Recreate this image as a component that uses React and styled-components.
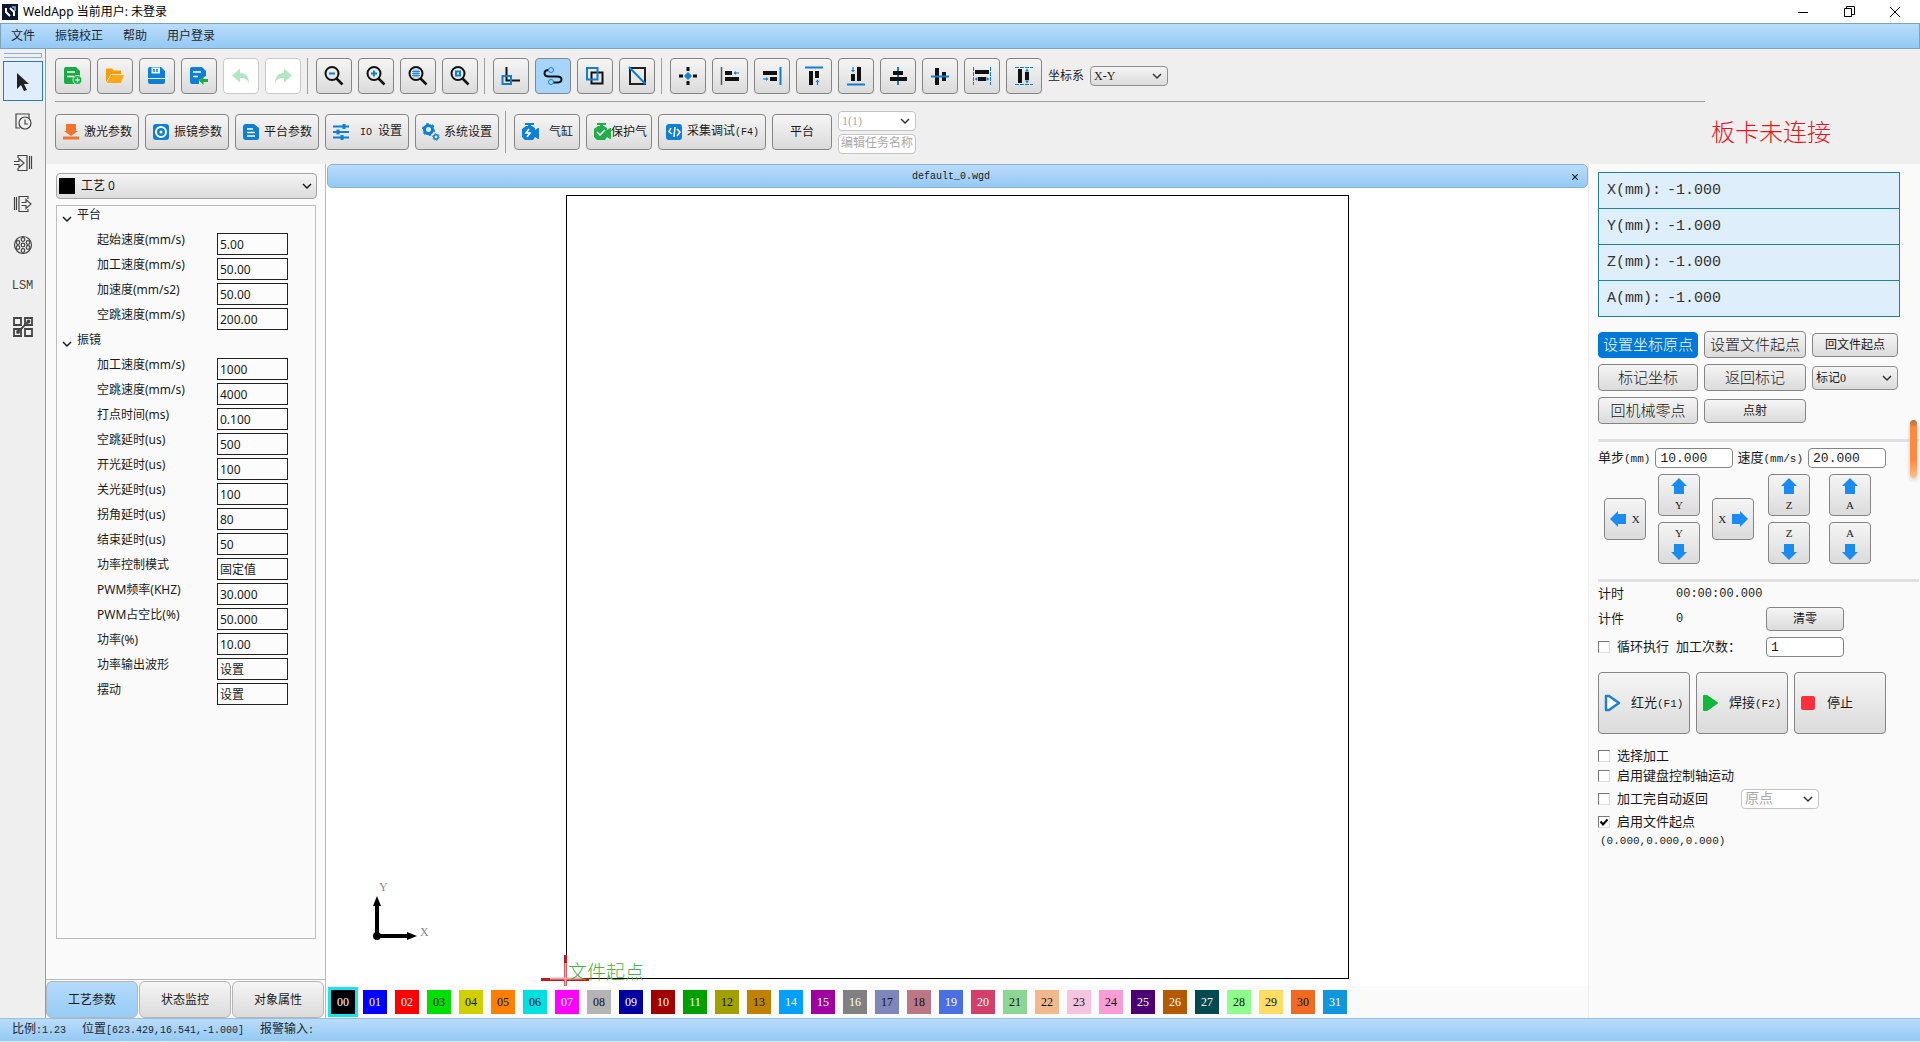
import { useState } from "react";
import styled, { createGlobalStyle, css } from "styled-components";

const ui = `"Noto Sans", "Noto Sans CJK SC", sans-serif`;
const song = `"Liberation Serif", "Noto Sans CJK SC", serif`;
const mono = `"Liberation Mono", "Noto Sans CJK SC", monospace`;

const blue = "#0f7fd4";
const bar = "linear-gradient(#badcfb, #93c9f4)";
const metal = "linear-gradient(#f5f5f5, #dbdbdb)";

const GlobalStyle = createGlobalStyle`
  * { box-sizing: border-box; }
  body {
    margin: 0;
    background: #efefef;
    color: #1a1a1a;
    font: 12px/16px ${song};
  }
  button, input, select {
    margin: 0;
    font: inherit;
    color: inherit;
  }
  svg { display: block; flex: none; }
`;

/* ---------- shared parts ---------- */

const Mono = styled.span`
  font-family: ${mono};
  font-size: ${(props) => props.$size}px;
`;

// half width letters are set smaller so that two of them fill one han cell
const Song = ({ size = 12, children }) =>
  children
    .split(/([\x20-\x7e]+)/)
    .map((part, i) =>
      i % 2 ? <Mono key={i} $size={Math.round((size * 5) / 6)}>{part}</Mono> : part
    );

const Button = styled.button`
  display: flex;
  align-items: center;
  justify-content: center;
  width: ${(props) => (props.$w ? props.$w + "px" : "auto")};
  height: ${(props) => props.$h || 24}px;
  padding: 0;
  border: 1px solid #858585;
  border-radius: 4px;
  background: ${metal};
  font-size: ${(props) => props.$size || 12}px;
  font-weight: ${(props) => (props.$size > 14 ? 300 : 400)};
  white-space: nowrap;
  ${(props) =>
    props.$primary &&
    css`
      border-color: #0078d7;
      background: #0078d7;
      color: #fff;
    `}
`;

const SelectWrap = styled.div`
  position: relative;
  width: ${(props) => props.$w}px;
  color: ${(props) => (props.$off ? "#a8a8a8" : "inherit")};
  svg {
    position: absolute;
    right: 5px;
    top: calc(50% - 6px);
    pointer-events: none;
    color: #333;
  }
`;

const SelectBox = styled.select`
  display: block;
  appearance: none;
  width: 100%;
  height: ${(props) => props.$h}px;
  padding: 0 20px 0 3px;
  border: 1px solid ${(props) => (props.$off ? "#c4c4c4" : "#8f8f8f")};
  border-radius: 4px;
  background: ${(props) => (props.$off ? "#fff" : metal)};
  font-size: ${(props) => props.$size || 12}px;
  opacity: 1;
`;

const Chevron = () => (
  <svg width="12" height="12" viewBox="0 0 12 12" fill="none" stroke="currentColor" strokeWidth="1.5">
    <path d="M2 4l4 4 4-4" />
  </svg>
);

const Select = ({ w, h, off, size, label, value }) => (
  <SelectWrap $w={w} $off={off}>
    <SelectBox $h={h} $off={off} $size={size} disabled={off} aria-label={label} defaultValue={value}>
      <option>{value}</option>
    </SelectBox>
    <Chevron />
  </SelectWrap>
);

const TextInput = styled.input`
  width: 78px;
  height: 20px;
  padding: 0 ${(props) => (props.disabled ? 2 : 4)}px;
  border: 1px solid ${(props) => (props.disabled ? "#c4c4c4" : "#858585")};
  border-radius: 4px;
  background: #fff;
  font-family: ${mono};
  font-size: ${(props) => props.$size || 13}px;
  &::placeholder {
    color: #a8a8a8;
  }
`;

/* ---------- title and menu ---------- */

const Window = styled.div`
  display: flex;
  flex-direction: column;
  min-height: 100vh;
`;

const TitleBar = styled.header`
  display: flex;
  align-items: center;
  gap: 5px;
  height: 23px;
  padding-left: 2px;
  background: #fff;
  color: #000;
  font-family: ${ui};
`;

const WindowButtons = styled.div`
  display: flex;
  margin-left: auto;
  padding-right: 2px;
  button {
    display: grid;
    place-items: center;
    width: 46px;
    height: 20px;
    padding: 0;
    border: 0;
    background: none;
  }
`;

const MenuBar = styled.nav`
  display: flex;
  align-items: center;
  gap: 20px;
  height: 26px;
  padding-left: 10px;
  border: 1px solid #7ba2be;
  background: ${bar};
  font-family: ${ui};
  a {
    color: #1c2733;
    text-decoration: none;
  }
`;

/* ---------- frame ---------- */

const Body = styled.div`
  flex: 1;
  display: flex;
`;

const SideTools = styled.div`
  display: flex;
  flex-direction: column;
  align-items: center;
  gap: 1px;
  width: 46px;
  padding-top: 4px;
  border-right: 1px solid #9c9c9c;
`;

const Grip = styled.div`
  width: 38px;
  height: 5px;
  margin-bottom: 2px;
  border: 1px solid #8fb0cb;
  border-left: 0;
`;

const SideButton = styled.button`
  display: grid;
  place-items: center;
  width: 40px;
  height: 40px;
  padding: 0;
  border: 1px solid ${(props) => (props.$on ? "#2a7ab5" : "transparent")};
  background: ${(props) => (props.$on ? "#e0eefb" : "none")};
  font: 12px ${mono};
  color: #444;
`;

const Main = styled.main`
  flex: 1;
  display: flex;
  flex-direction: column;
  min-width: 0;
`;

const Top = styled.div`
  display: flex;
  height: 115px;
`;

const Toolbars = styled.div`
  flex: 1;
  padding-left: 9px;
`;

const ToolRow = styled.div`
  display: flex;
  align-items: center;
  gap: 6px;
  height: ${(props) => props.$h}px;
  padding-top: ${(props) => (props.$line ? 2 : 0)}px;
  padding-bottom: ${(props) => props.$pad || 0}px;
  border-bottom: ${(props) => (props.$line ? "1px solid #9f9f9f" : "0")};
`;

const Divider = styled.div`
  width: 1px;
  height: ${(props) => props.$h}px;
  margin-right: 2px;
  background: #9f9f9f;
`;

const ToolButton = styled(Button)`
  width: 36px;
  height: 36px;
  background: ${(props) => (props.$on ? "#a6d4fb" : metal)};
  &:disabled {
    border-color: #c9c9c9;
    background: #fff;
  }
`;

const LabelButton = styled(Button)`
  height: 36px;
  padding: 0 6px;
  justify-content: ${(props) => (props.$center ? "center" : "space-between")};
`;

const Stack = styled.div`
  display: grid;
  gap: 3px;
`;

const Alert = styled.div`
  width: 215px;
  padding: 68px 0 0 6px;
  color: #e8141c;
  font-size: 24px;
  line-height: 32px;
  font-weight: 300;
`;

const Work = styled.div`
  flex: 1;
  display: flex;
`;

/* ---------- left panel ---------- */

const LeftPanel = styled.aside`
  display: flex;
  flex-direction: column;
  width: 280px;
  background: #fafafa;
  border-right: 1px solid #b9b9b9;
`;

const CraftSelect = styled.div`
  display: flex;
  align-items: center;
  position: relative;
  height: 26px;
  margin: 9px 8px 6px 10px;
  padding-left: 2px;
  border: 1px solid #a3a3a3;
  border-radius: 4px;
  background: ${metal};
  select {
    flex: 1;
    appearance: none;
    height: 24px;
    padding: 0 6px;
    border: 0;
    background: none;
    font-family: ${ui};
  }
  svg {
    position: absolute;
    right: 3px;
    pointer-events: none;
  }
`;

const Swatch = styled.span`
  width: 16px;
  height: 16px;
  background: #000;
`;

const Tree = styled.div`
  flex: 1;
  margin: 0 9px 40px 10px;
  border: 1px solid #bdbdbd;
  font-family: ${ui};
`;

const Group = styled.div`
  display: flex;
  gap: 4px;
  height: 25px;
  padding-left: 4px;
  line-height: 18px;
  svg {
    margin-top: 7px;
  }
`;

const Param = styled.label`
  display: flex;
  height: 25px;
  padding-left: 40px;
  line-height: 18px;
  span {
    width: 120px;
  }
  input {
    width: 71px;
    height: 22px;
    margin-top: 2px;
    padding: 0 2px;
    border: 1px solid #222;
    background: #fcfcfc;
    font-family: ${ui};
  }
`;

const Tabs = styled.div`
  display: grid;
  grid-template-columns: repeat(3, 1fr);
  gap: 1px;
  height: 39px;
  padding: 1px 1px 1px 0;
  border-top: 1px solid #b9b9b9;
`;

const Tab = styled(Button)`
  height: 37px;
  border-color: #b5b5b5;
  border-radius: 6px;
  background: ${(props) => (props.$on ? "linear-gradient(#b5dafb, #97ccf6)" : metal)};
`;

/* ---------- drawing area ---------- */

const Center = styled.section`
  flex: 1;
  display: flex;
  flex-direction: column;
  min-width: 0;
  background: #fff;
`;

const FileTab = styled.div`
  display: flex;
  align-items: center;
  height: 24px;
  padding: 1px 3px 0 8px;
  margin-left: 1px;
  border: 1px solid #8cb3d1;
  border-radius: 5px;
  background: ${bar};
  span {
    flex: 1;
    text-align: center;
  }
  button {
    width: 18px;
    padding: 0;
    border: 0;
    background: none;
    line-height: 16px;
    svg {
      margin: auto;
    }
  }
`;

const Canvas = styled.div`
  flex: 1;
  position: relative;
  > svg {
    position: absolute;
    inset: 0;
    width: 100%;
    height: 100%;
  }
`;

const Palette = styled.div`
  display: flex;
  align-items: center;
  gap: 8px;
  height: 32px;
  padding-left: 5px;
  background: #fafafa;
`;

const PaletteButton = styled.button`
  width: 24px;
  height: 24px;
  padding: 0;
  border: 0;
  outline: ${(props) => (props.$on ? "3px solid #19e3ee" : "none")};
  background: ${(props) => props.$bg};
  color: ${(props) => props.$fg};
  font: 12px/24px ${song};
`;

/* ---------- right panel ---------- */

const RightPanel = styled.aside`
  position: relative;
  width: 332px;
  padding: 8px 1px 0 9px;
  border-left: 1px solid #ececec;
  background: #fafafa;
`;

const Readout = styled.div`
  width: 302px;
  border: 1px solid #1f809f;
  background: #deeefa;
  color: #333;
  div {
    display: flex;
    gap: 6px;
    height: 36px;
    padding-left: 8px;
    font: 15px/36px ${mono};
    border-bottom: 1px solid #1f809f;
  }
  div:last-child {
    height: 35px;
    border: 0;
  }
`;

const Actions = styled.div`
  display: grid;
  grid-template-columns: 100px 102px 86px;
  grid-auto-rows: 27px;
  align-items: center;
  gap: 6px;
  padding: 14px 0 15px;
`;

const Rule = styled.div`
  height: 3px;
  background: #e0e0e0;
`;

const StepRow = styled.div`
  display: flex;
  align-items: center;
  gap: 4px;
  padding: 6px 0;
  label {
    display: flex;
    align-items: center;
    gap: 5px;
    font-size: 13px;
    white-space: nowrap;
  }
`;

const Jog = styled.div`
  display: grid;
  grid-template-columns: 54px 54px 56px 61px 42px;
  grid-template-rows: 42px 42px;
  gap: 6px 0;
  padding: 0 0 15px 6px;
`;

const JogButton = styled(Button)`
  width: 42px;
  height: 42px;
  flex-direction: ${(props) => props.$dir};
  justify-content: space-evenly;
  grid-row: ${(props) => props.$row};
  grid-column: ${(props) => props.$col};
  align-self: center;
  font-size: 11px;
  line-height: 14px;
`;

const Counter = styled.div`
  display: grid;
  grid-template-columns: 78px 90px 78px;
  align-items: center;
  grid-template-rows: 24px 25px 32px;
  font-size: 13px;
`;

const Check = styled.label`
  display: flex;
  align-items: center;
  gap: 7px;
  height: ${(props) => props.$h || 20}px;
  font-size: 13px;
  white-space: nowrap;
  input {
    appearance: none;
    width: 12px;
    height: 12px;
    border: 1px solid #777;
    border-color: #777 #ddd #ddd #777;
    background: #fff;
  }
  input:checked {
    background: #fff
      url("data:image/svg+xml,%3Csvg xmlns='http://www.w3.org/2000/svg' viewBox='0 0 10 10'%3E%3Cpath d='M1.5 4.5l2.5 3 4.5-5' fill='none' stroke='%23000' stroke-width='2'/%3E%3C/svg%3E");
  }
`;

const RunButtons = styled.div`
  display: grid;
  grid-template-columns: repeat(3, 92px);
  gap: 6px;
  padding: 9px 0 12px;
`;

const RunButton = styled(Button)`
  height: 62px;
  justify-content: flex-start;
  gap: 10px;
  padding-left: 4px;
  font-size: 13px;
`;

const Spread = styled.div`
  display: flex;
  align-items: center;
  gap: 33px;
  height: 26px;
`;

const Origin = styled.div`
  padding-left: 2px;
  font: 11px/18px ${mono};
`;

const Handle = styled.div`
  position: absolute;
  right: 3px;
  top: 256px;
  width: 7px;
  height: 58px;
  border-radius: 4px;
  background: linear-gradient(#a9714a, #ff8a3d 8px, #ff8a3d 40px, #ffc08f);
  box-shadow: 0 2px 4px #ccc;
`;

const StatusBar = styled.footer`
  display: flex;
  align-items: center;
  gap: 16px;
  height: 24px;
  padding-left: 12px;
  border-top: 1px solid #9bbfda;
  border-bottom: 1px solid #dfeefb;
  background: ${bar};
  color: #1c2733;
`;

/* ---------- icons ---------- */

// tool icons are drawn on the 36px button grid
const Glyph = ({ children }) => (
  <svg width="34" height="34" viewBox="1 1 34 34" fill="none">{children}</svg>
);

const Small = ({ children }) => (
  <svg width="18" height="18" viewBox="0 0 18 18" fill="none">{children}</svg>
);

const Lens = ({ children }) => (
  <Glyph>
    <circle cx="16" cy="15.5" r="6.5" stroke="#111" strokeWidth="2" />
    <path d="M20.5 20.5l6 6" stroke="#111" strokeWidth="2.5" />
    {children}
  </Glyph>
);

const fileIcons = [
  <Glyph>
    <path d="M11 9h10l4 4v7a5 5 0 0 0-6 6h-8a2 2 0 0 1-2-2V11a2 2 0 0 1 2-2z" fill="#1aab47" />
    <path d="M12 14h8M12 18.500h7" stroke="#fff" strokeWidth="1.500" />
    <circle cx="22.500" cy="22" r="4.500" fill="#1aab47" stroke="#d9f1e0" />
    <path d="M20 22h5M22.500 19.500v5" stroke="#fff" strokeWidth="1.200" />
  </Glyph>,
  <Glyph>
    <path d="M9 24V11.500a1 1 0 0 1 1-1h5l2 2h7v3.500H14z" fill="#f99c0a" />
    <path d="M14 17h13l-3 8H9.500z" fill="#ffa914" />
  </Glyph>,
  <Glyph>
    <path d="M11 9h11l4 4v9H9V11a2 2 0 0 1 2-2z" fill={blue} />
    <path d="M12.500 9.500h8.500v6h-8.500z" fill="#eaf4fc" />
    <path d="M15 11v3M18 11v3" stroke={blue} strokeWidth="1.500" />
    <path d="M9 20.500h17" stroke="#eaf4fc" />
    <path d="M9 21.500h17V24a2 2 0 0 1-2 2H11a2 2 0 0 1-2-2z" fill={blue} />
  </Glyph>,
  <Glyph>
    <path d="M11 9h10l4 4v5l-7 4v4h-7a2 2 0 0 1-2-2V11a2 2 0 0 1 2-2z" fill={blue} />
    <path d="M12 14h8M12 18.500h5" stroke="#fff" strokeWidth="1.500" />
    <path d="M18 22.500l4.500-4v2.500h4.500v3h-4.500v3z" fill="#17ad3c" />
  </Glyph>,
];

const historyIcons = [
  <Glyph><path d="M17 10.500v4.500c6 0 9 4 9 10-2-4-4-5-9-5v4.500l-8-7z" fill="#b3e6c2" /></Glyph>,
  <Glyph><path d="M19 10.500v4.500c-6 0-9 4-9 10 2-4 4-5 9-5v4.500l8-7z" fill="#b3e6c2" /></Glyph>,
];

const zoomIcons = [
  <Lens><path d="M13 15.500h6" stroke={blue} strokeWidth="2" /></Lens>,
  <Lens><path d="M13 15.500h6M16 12.500v6" stroke={blue} strokeWidth="2" /></Lens>,
  <Lens><path d="M12 13.500h8M12 15.500h8M12 17.500h8M14 11.500v8M16 11.500v8M18 11.500v8" stroke={blue} strokeWidth=".8" /></Lens>,
  <Lens><path d="M14 13.500h4v4h-4z" stroke={blue} strokeWidth="2" /></Lens>,
];

const viewIcons = [
  <Glyph>
    <path d="M13.500 9v13.500H27" stroke="#111" strokeWidth="2" />
    <path d="M9.500 18h8.500v8H9.500z" stroke={blue} strokeWidth="2" />
  </Glyph>,
  <Glyph>
    <path d="M16 12H14c-6 0-6 6.500 0 6.500h8c6 0 6 6 0 6h-6" stroke="#111" strokeWidth="2" />
    <circle cx="16" cy="12" r="2.500" fill="#a6d4fb" stroke={blue} />
    <circle cx="16" cy="24" r="2.500" fill="#a6d4fb" stroke={blue} />
  </Glyph>,
  <Glyph>
    <path d="M14.500 14.500h11v11h-11z" stroke="#111" strokeWidth="2" />
    <path d="M10 10h10.500v11.500H10z" stroke={blue} strokeWidth="2" />
  </Glyph>,
  <Glyph>
    <path d="M11 26V10h15v16z" stroke="#222" strokeWidth="2" />
    <path d="M10 9l16.500 17" stroke={blue} strokeWidth="2" />
  </Glyph>,
];

const alignIcons = [
  <Glyph>
    <path d="M18 9v4M18 23v4M9 18h4M23 18h4" stroke="#111" strokeWidth="3" />
    <path d="M18 14.500l3.500 3.500-3.500 3.500-3.500-3.500z" fill={blue} stroke={blue} />
  </Glyph>,
  <Glyph>
    <path d="M9.500 9v18" stroke="#555" strokeWidth="1.500" />
    <path d="M13 13h7v4h-7zM13 19h14v4H13z" fill="#111" />
    <path d="M27 15h-4" stroke={blue} strokeWidth="1.200" /><path d="M21.500 15l2.500-2v4z" fill={blue} />
  </Glyph>,
  <Glyph>
    <path d="M26.500 9v18" stroke={blue} strokeWidth="2" />
    <path d="M9 13h14v4H9zM16 19h7v4h-7z" fill="#111" />
    <path d="M9 21h4" stroke={blue} strokeWidth="1.200" /><path d="M14.500 21l-2.500-2v4z" fill={blue} />
  </Glyph>,
  <Glyph>
    <path d="M9 9.500h18" stroke={blue} strokeWidth="2" />
    <path d="M13 13h4v14h-4zM19 13h4v7h-4z" fill="#111" />
    <path d="M21.500 27v-3" stroke={blue} strokeWidth="1.200" /><path d="M21.500 21.500l2 2.500h-4z" fill={blue} />
  </Glyph>,
  <Glyph>
    <path d="M9 26.500h18" stroke={blue} strokeWidth="2" />
    <path d="M13 16h4v7h-4zM19 9h4v14h-4z" fill="#111" />
    <path d="M15 9v3" stroke={blue} strokeWidth="1.200" /><path d="M15 14.500l2-2.500h-4z" fill={blue} />
  </Glyph>,
  <Glyph>
    <path d="M18 9v18" stroke={blue} strokeWidth="2" />
    <path d="M13 13h10v4H13zM10 19h17v4H10z" fill="#111" />
  </Glyph>,
  <Glyph>
    <path d="M13 10h4v17h-4zM20 14h4v9h-4z" fill="#111" />
    <path d="M9 18.500h18" stroke={blue} strokeWidth="2" />
  </Glyph>,
  <Glyph>
    <path d="M9.500 9v18M26.500 9v18" stroke={blue} strokeDasharray="4 1" />
    <path d="M11 12h14v4H11zM14 19h8v4h-8z" fill="#111" />
    <path d="M10.500 21l3-2v4zM25.500 21l-3-2v4z" fill={blue} />
  </Glyph>,
  <Glyph>
    <path d="M9 9.500h18M9 26.500h18" stroke={blue} strokeDasharray="4 1" />
    <path d="M12 11h4v14h-4zM19 14h4v8h-4z" fill="#111" />
    <path d="M21 10.500l2 3h-4zM21 25.500l2-3h-4z" fill={blue} />
  </Glyph>,
];

const Cylinder = ({ color, mark }) => (
  <Small>
    <path d="M5 3h2V2H4V0h9v2h-3v1h1l3 2v2l3-2h1v11h-1l-3-2-2 3H4l-3-3V6z" fill={color} />
    <path d={mark} stroke="#fff" strokeWidth="1.500" />
  </Small>
);

const paramButtons = [
  ["激光参数", <Small><path d="M4 1h10v7h2l-7 5-7-5h2z" fill="#f5722d" /><path d="M1 15h16" stroke="#f5722d" strokeWidth="3" /></Small>],
  ["振镜参数", <Small>
    <rect x="1" y="1" width="16" height="16" rx="3" fill={blue} />
    <circle cx="9" cy="9" r="5" stroke="#fff" strokeWidth="2" /><circle cx="9" cy="9" r="1.500" fill="#fff" />
  </Small>],
  ["平台参数", <Small>
    <path d="M4 1h8l5 4v10a2 2 0 0 1-2 2H4a3 3 0 0 1-3-3V4a3 3 0 0 1 3-3z" fill={blue} />
    <path d="M5 6h6M5 9.500h8M5 13h8" stroke="#fff" strokeWidth="1.500" />
  </Small>],
  ["IO 设置", <Small>
    <path d="M1 3.500h16M1 9h16M1 14.500h16" stroke={blue} strokeWidth="2" />
    <path d="M12 1v5M6 6.500v5M10 12v5" stroke={blue} strokeWidth="3" />
  </Small>],
  ["系统设置", <Small>
    <circle cx="6.500" cy="6.500" r="4" stroke={blue} strokeWidth="3" />
    <circle cx="6.500" cy="6.500" r="5.500" stroke={blue} strokeWidth="2" strokeDasharray="2.400 3.360" />
    <circle cx="14" cy="14" r="2.200" stroke={blue} strokeWidth="1.500" />
    <circle cx="14" cy="14" r="3.300" stroke={blue} strokeDasharray="1.400 2.050" />
  </Small>],
];

const arrowTurn = { up: 0, right: 90, down: 180, left: 270 };

const Arrow = ({ to }) => (
  <svg width="16" height="16" viewBox="0 0 16 16">
    <path d="M8 0l8 8h-3v8H3V8H0z" fill="#1a8cf0" transform={`rotate(${arrowTurn[to]} 8 8)`} />
  </svg>
);

const sideIcons = [
  <svg width="24" height="24" viewBox="0 0 24 24"><path d="M6 4v16l4-4 3 6 3-1-3-6h5z" fill="#222" /></svg>,
  <svg width="20" height="20" viewBox="0 0 20 20" fill="none" stroke="#444" strokeWidth="1.200">
    <path d="M7 16H3V2h13v4" /><circle cx="12" cy="11" r="6" /><path d="M12 7.500V12h3" />
  </svg>,
  <svg width="20" height="20" viewBox="0 0 20 20" fill="none" stroke="#444" strokeWidth="1.200">
    <path d="M5 5V2.500h9v15H5V15M16.500 3v13M18.500 3v13" /><path d="M1 8.500h5V5.500l5 4.500-5 4.500v-3H1" />
  </svg>,
  <svg width="20" height="20" viewBox="0 0 20 20" fill="none" stroke="#444" strokeWidth="1.200">
    <path d="M15 5V2.500H6v15h9V15M3.500 3v13M1.500 3v13" /><path d="M8.500 8.500H13V5.500l5 4.500-5 4.500v-3H8.500" />
  </svg>,
  <svg width="20" height="20" viewBox="0 0 20 20" fill="none" stroke="#444" strokeWidth="1.200">
    <circle cx="10" cy="10" r="8.500" /><circle cx="10" cy="10" r="1.800" />
    <circle cx="10" cy="4.500" r="1.800" /><circle cx="10" cy="15.500" r="1.800" />
    <circle cx="5" cy="7.500" r="1.800" /><circle cx="15" cy="7.500" r="1.800" />
    <circle cx="5" cy="12.500" r="1.800" /><circle cx="15" cy="12.500" r="1.800" />
  </svg>,
  "LSM",
  <svg width="22" height="22" viewBox="0 0 22 22" fill="none" stroke="#444" strokeWidth="1.800">
    <path d="M2 2h7v7H2zM13 2h7v7h-7zM2 13h7v7H2zM13 13h7v7h-7z" /><path d="M6 16L17 5" />
    <circle cx="6" cy="16" r="1" fill="#222" /><circle cx="16.500" cy="5.500" r="1" fill="#222" />
  </svg>,
];

const sideNames = ["选择", "定时", "输入", "输出", "转盘", "LSM", "阵列"];

/* ---------- data ---------- */

const groups = [
  ["平台", [
    ["起始速度(mm/s)", "5.00"],
    ["加工速度(mm/s)", "50.00"],
    ["加速度(mm/s2)", "50.00"],
    ["空跳速度(mm/s)", "200.00"],
  ]],
  ["振镜", [
    ["加工速度(mm/s)", "1000"],
    ["空跳速度(mm/s)", "4000"],
    ["打点时间(ms)", "0.100"],
    ["空跳延时(us)", "500"],
    ["开光延时(us)", "100"],
    ["关光延时(us)", "100"],
    ["拐角延时(us)", "80"],
    ["结束延时(us)", "50"],
    ["功率控制模式", "固定值"],
    ["PWM频率(KHZ)", "30.000"],
    ["PWM占空比(%)", "50.000"],
    ["功率(%)", "10.00"],
    ["功率输出波形", "设置"],
    ["摆动", "设置"],
  ]],
];

const colors = [
  "#000000", "#0000ff", "#ff0000", "#00e000", "#d0d000", "#ff8000", "#00e0e0", "#ff00ff",
  "#b4b4b4", "#0000a0", "#a00000", "#00a000", "#a0a000", "#c08000", "#00a0ff", "#a000a0",
  "#808080", "#7d87b9", "#bb7784", "#4a6fe3", "#d33f6a", "#8dd593", "#f0b98d", "#f6c4e1",
  "#f79cd4", "#4b0073", "#b35a00", "#004a50", "#8cff8c", "#ffdc64", "#f26a22", "#0f96dc",
];
const darkText = [3, 4, 5, 6, 8, 12, 13, 17, 18, 21, 22, 23, 24, 28, 29, 30];

const jogs = [
  ["X", "left", "1 / 3", 1],
  ["Y", "up", 1, 2],
  ["Y", "down", 2, 2],
  ["X", "right", "1 / 3", 3],
  ["Z", "up", 1, 4],
  ["Z", "down", 2, 4],
  ["A", "up", 1, 5],
  ["A", "down", 2, 5],
];
const jogFlow = { up: "column", down: "column-reverse", left: "row", right: "row-reverse" };

const tools = (icons, name, on) =>
  icons.map((icon, i) => (
    <ToolButton key={i} $on={i === on} disabled={name === "history"} aria-label={name + i}>
      {icon}
    </ToolButton>
  ));

const Drawing = () => (
  <Canvas>
    <svg>
      <g fill="none" stroke="#000">
        <rect x="240.5" y="7.5" width="782" height="783" />
        <path d="M51 748V714M51 748h34" strokeWidth="4" />
      </g>
      <path d="M51 708l4 10h-8zM91 748l-10-4v8z" />
      <circle cx="51" cy="748" r="4" />
      <path d="M239.500 767v31M215 791.500h48" stroke="#c4161c" strokeWidth="3" />
      <path d="M239.500 775v23M224 790.500h32" stroke="#eda9a9" strokeWidth="2" />
      <g fontFamily={song} fontSize="12" fill="#888">
        <text x="53" y="703">Y</text>
        <text x="94" y="748">X</text>
      </g>
      <text x="242" y="791" fontFamily={song} fontSize="19" fontWeight="300" fill="#4caf50">文件起点</text>
    </svg>
  </Canvas>
);

const App = () => {
  const [craft, setCraft] = useState(0);
  const [params, setParams] = useState({});

  return (
    <Window>
      <GlobalStyle />
      <TitleBar>
        <svg width="16" height="16" viewBox="0 0 16 16" fill="none">
          <rect width="16" height="16" fill="#0d1730" />
          <path d="M4 4v4l4 4M8 4l4 4v4" stroke="#fff" strokeWidth="2" />
          <path d="M10 3h3v4" stroke="#8bb6f0" strokeWidth="1.500" />
        </svg>
        WeldApp 当前用户: 未登录
        <WindowButtons>
          <button aria-label="最小化"><svg width="10" height="10" stroke="#000"><path d="M0 5.500h10" /></svg></button>
          <button aria-label="还原">
            <svg width="11" height="11" fill="none" stroke="#000"><path d="M.5 2.500h7v8h-7zM2.500 2.500v-2h8v8h-3" /></svg>
          </button>
          <button aria-label="关闭"><svg width="10" height="10" stroke="#000"><path d="M0 0l10 10M10 0L0 10" /></svg></button>
        </WindowButtons>
      </TitleBar>
      <MenuBar>
        {["文件", "振镜校正", "帮助", "用户登录"].map((m) => (
          <a key={m} href="#menu">{m}</a>
        ))}
      </MenuBar>

      <Body>
        <SideTools>
          <Grip />
          {sideIcons.map((icon, i) => (
            <SideButton key={i} $on={i === 0} aria-label={sideNames[i]}>{icon}</SideButton>
          ))}
        </SideTools>

        <Main>
          <Top>
            <Toolbars>
              <ToolRow $h={53} $line>
                {tools(fileIcons, "file")}
                {tools(historyIcons, "history")}
                <Divider $h={36} />
                {tools(zoomIcons, "zoom")}
                <Divider $h={36} />
                {tools(viewIcons, "view", 1)}
                <Divider $h={36} />
                {tools(alignIcons, "align")}
                <span>坐标系</span>
                <Select w={78} h={20} label="坐标系" value="X-Y" />
              </ToolRow>
              <ToolRow $h={62} $pad={2}>
                {paramButtons.map(([name, icon]) => (
                  <LabelButton key={name} $w={84}>
                    {icon}
                    <span><Song>{name}</Song></span>
                  </LabelButton>
                ))}
                <Divider $h={42} />
                <LabelButton $w={66}>
                  <Cylinder color={blue} mark="M8 6l-3 4h4l-3 4" />
                  气缸
                </LabelButton>
                <LabelButton $w={66}>
                  <Cylinder color="#22ad4b" mark="M4 9l3 3 5-5" />
                  保护气
                </LabelButton>
                <LabelButton $w={108}>
                  <Small>
                    <rect x="1" y="1" width="16" height="16" rx="3" fill={blue} />
                    <path d="M6 5L4 8.500 7 11M10 4l-1 10M12 6l3 3-3 4" stroke="#fff" strokeWidth="1.500" />
                  </Small>
                  <span><Song>采集调试(F4)</Song></span>
                </LabelButton>
                <LabelButton $w={60} $center>平台</LabelButton>
                <Stack>
                  <Select w={78} h={20} off label="任务" value="1(1)" />
                  <TextInput $size={12} placeholder="编辑任务名称" aria-label="编辑任务名称" disabled />
                </Stack>
              </ToolRow>
            </Toolbars>
            <Alert>板卡未连接</Alert>
          </Top>

          <Work>
            <LeftPanel>
              <CraftSelect>
                <Swatch />
                <select aria-label="工艺"><option>工艺 0</option></select>
                <Chevron />
              </CraftSelect>
              <Tree>
                {groups.map(([name, rows]) => (
                  <div key={name}>
                    <Group><Chevron />{name}</Group>
                    {rows.map(([label, value]) => (
                      <Param key={label}>
                        <span>{label}</span>
                        <input
                          value={params[name + label] ?? value}
                          onChange={(e) => setParams({ ...params, [name + label]: e.target.value })}
                        />
                      </Param>
                    ))}
                  </div>
                ))}
              </Tree>
              <Tabs>
                <Tab $on>工艺参数</Tab>
                <Tab>状态监控</Tab>
                <Tab>对象属性</Tab>
              </Tabs>
            </LeftPanel>

            <Center>
              <FileTab>
                <Mono $size={10}>default_0.wgd</Mono>
                <button aria-label="关闭文件">
                  <svg width="6" height="6" stroke="#222" strokeWidth="1.200"><path d="M0 0l6 6M6 0L0 6" /></svg>
                </button>
              </FileTab>
              <Drawing />
              <Palette>
                {colors.map((c, i) => (
                  <PaletteButton
                    key={c}
                    $bg={c}
                    $fg={darkText.includes(i) ? "#111" : "#fff"}
                    $on={i === craft}
                    onClick={() => setCraft(i)}
                  >
                    {String(i).padStart(2, "0")}
                  </PaletteButton>
                ))}
              </Palette>
            </Center>

            <RightPanel>
              <Readout>
                {["X", "Y", "Z", "A"].map((axis) => (
                  <div key={axis}>
                    <span>{axis}(mm):</span>
                    <span>-1.000</span>
                  </div>
                ))}
              </Readout>
              <Actions>
                <Button $primary $h={26} $size={15}>设置坐标原点</Button>
                <Button $h={27} $size={15}>设置文件起点</Button>
                <Button>回文件起点</Button>
                <Button $h={27} $size={15}>标记坐标</Button>
                <Button $h={27} $size={15}>返回标记</Button>
                <Select w={86} h={24} label="标记" value="标记0" />
                <Button $h={27} $size={15}>回机械零点</Button>
                <Button>点射</Button>
              </Actions>
              <Rule />
              <StepRow>
                <label><span><Song size={13}>单步(mm)</Song></span><TextInput defaultValue="10.000" /></label>
                <label><span><Song size={13}>速度(mm/s)</Song></span><TextInput defaultValue="20.000" /></label>
              </StepRow>
              <Jog>
                {jogs.map(([axis, to, row, col]) => (
                  <JogButton key={axis + to} $dir={jogFlow[to]} $row={row} $col={col}>
                    <Arrow to={to} />
                    {axis}
                  </JogButton>
                ))}
              </Jog>
              <Rule />
              <Counter>
                <span>计时</span>
                <Mono $size={12}>00:00:00.000</Mono>
                <span />
                <span>计件</span>
                <Mono $size={12}>0</Mono>
                <Button>清零</Button>
                <Check><input type="checkbox" />循环执行</Check>
                <label htmlFor="times">加工次数：</label>
                <TextInput id="times" defaultValue="1" />
              </Counter>
              <RunButtons>
                <RunButton>
                  <svg width="18" height="18" viewBox="0 0 18 18" fill="#fff" stroke="#1f80cc" strokeWidth="2.500" strokeLinejoin="round">
                    <path d="M3 2h3l10 7-10 7H3z" />
                  </svg>
                  <span><Song size={13}>红光(F1)</Song></span>
                </RunButton>
                <RunButton>
                  <svg width="18" height="18" viewBox="0 0 18 18" fill="#12b83c" stroke="#12b83c" strokeWidth="2" strokeLinejoin="round">
                    <path d="M3 2h3l10 7-10 7H3z" />
                  </svg>
                  <span><Song size={13}>焊接(F2)</Song></span>
                </RunButton>
                <RunButton>
                  <svg width="18" height="18" viewBox="0 0 18 18"><rect x="2" y="2" width="14" height="14" rx="2" fill="#ff2e3d" /></svg>
                  停止
                </RunButton>
              </RunButtons>
              <Check><input type="checkbox" />选择加工</Check>
              <Check><input type="checkbox" />启用键盘控制轴运动</Check>
              <Spread>
                <Check><input type="checkbox" />加工完自动返回</Check>
                <Select w={78} h={20} off size={14} label="返回位置" value="原点" />
              </Spread>
              <Check><input type="checkbox" defaultChecked />启用文件起点</Check>
              <Origin>(0.000,0.000,0.000)</Origin>
              <Handle />
            </RightPanel>
          </Work>
        </Main>
      </Body>

      <StatusBar>
        <span><Song>比例:1.23</Song></span>
        <span><Song>位置[623.429,16.541,-1.000]</Song></span>
        <span><Song>报警输入:</Song></span>
      </StatusBar>
    </Window>
  );
};

export default App;
